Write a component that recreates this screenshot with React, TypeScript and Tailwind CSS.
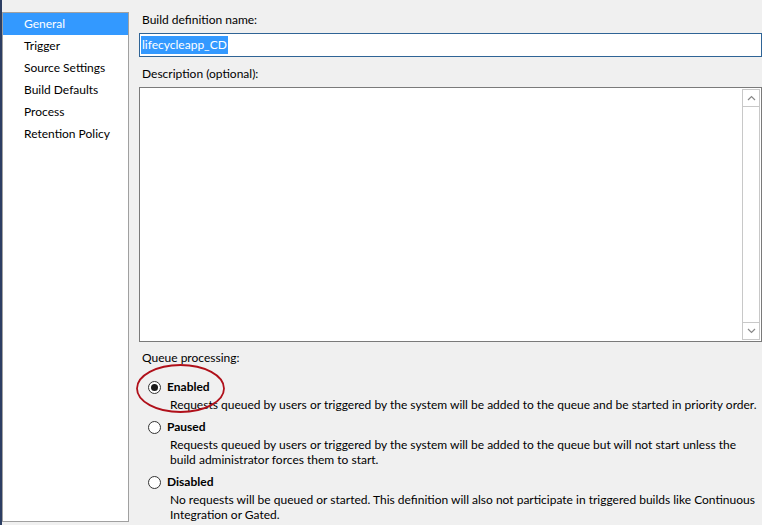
import React from "react";

const navItems = [
  "General",
  "Trigger",
  "Source Settings",
  "Build Defaults",
  "Process",
  "Retention Policy",
];

type QueueOption = {
  label: string;
  lines: string[];
  checked?: boolean;
};

const queueOptions: QueueOption[] = [
  {
    label: "Enabled",
    checked: true,
    lines: [
      "Requests queued by users or triggered by the system will be added to the queue and be started in priority order.",
    ],
  },
  {
    label: "Paused",
    lines: [
      "Requests queued by users or triggered by the system will be added to the queue but will not start unless the",
      "build administrator forces them to start.",
    ],
  },
  {
    label: "Disabled",
    lines: [
      "No requests will be queued or started. This definition will also not participate in triggered builds like Continuous",
      "Integration or Gated.",
    ],
  },
];

function Radio({ checked }: { checked?: boolean }) {
  return (
    <span className="flex h-[13px] w-[13px] items-center justify-center rounded-full border border-[#333] bg-white">
      {checked && <span className="h-[7px] w-[7px] rounded-full bg-[#1a1a1a]" />}
    </span>
  );
}

export default function App() {
  return (
    <div
      className="flex h-[525px] w-[762px] overflow-hidden bg-[#f0f0f0] text-[12px] text-black"
      style={{ fontFamily: '"Segoe UI", Lato, "Noto Sans", sans-serif' }}
    >
      <div className="w-[2px] shrink-0 bg-[#2c3e63]" />

      <div className="mt-[12px] h-[510px] w-[127px] shrink-0 border border-[#a0a0a0] bg-white">
        <ul>
          {navItems.map((item, i) => (
            <li
              key={item}
              className={`flex h-[22px] items-center pl-[21px] leading-none ${
                i === 0 ? "bg-[#3399ff] text-white" : ""
              }`}
            >
              {item}
            </li>
          ))}
        </ul>
      </div>

      <div className="ml-[10px] min-w-0 flex-1">
        <div className="mt-[12px] h-[21px] pl-[3px] leading-[16px]">Build definition name:</div>
        <div className="flex h-[24px] items-center border border-[#2f6496] bg-white pl-[1px]">
          <span className="bg-[#3399ff] px-[1px] leading-[18px] text-white">lifecycleapp_CD</span>
        </div>

        <div className="mt-[9px] h-[21px] pl-[3px] leading-[16px]">Description (optional):</div>
        <div className="flex h-[255px] justify-end border border-[#7a7a7a] bg-white p-[1px]">
          <div className="flex w-[18px] flex-col justify-between">
            <div className="flex h-[18px] items-center justify-center border border-[#c8c8c8]">
              <svg width="9" height="6" viewBox="0 0 9 6">
                <path d="M1 5 L4.5 1.5 L8 5" fill="none" stroke="#888" strokeWidth="1.2" />
              </svg>
            </div>
            <div className="flex-1 border-x border-[#c8c8c8]" />
            <div className="flex h-[18px] items-center justify-center border border-[#c8c8c8]">
              <svg width="9" height="6" viewBox="0 0 9 6">
                <path d="M1 1 L4.5 4.5 L8 1" fill="none" stroke="#888" strokeWidth="1.2" />
              </svg>
            </div>
          </div>
        </div>

        <div className="mt-[8px] pl-[3px] leading-[16px]">Queue processing:</div>

        <div className="relative mt-[13px] flex flex-col">
          {queueOptions.map((opt) => (
            <div key={opt.label} className="mb-[7px] flex flex-col">
              <div className="flex h-[16px] items-center pl-[9px] leading-[16px]">
                <Radio checked={opt.checked} />
                <span className="ml-[6px] font-bold">{opt.label}</span>
              </div>
              <div className="mt-[2px] pl-[31px] leading-[15px] whitespace-nowrap">
                {opt.lines.map((line) => (
                  <div key={line}>{line}</div>
                ))}
              </div>
            </div>
          ))}
          <svg
            className="pointer-events-none absolute left-[-4px] top-[-16px]"
            width="91"
            height="51"
            viewBox="0 0 91 51"
          >
            <ellipse cx="45.5" cy="25.5" rx="43.5" ry="23.5" fill="none" stroke="#b0101a" strokeWidth="1.8" />
          </svg>
        </div>
      </div>
    </div>
  );
}
